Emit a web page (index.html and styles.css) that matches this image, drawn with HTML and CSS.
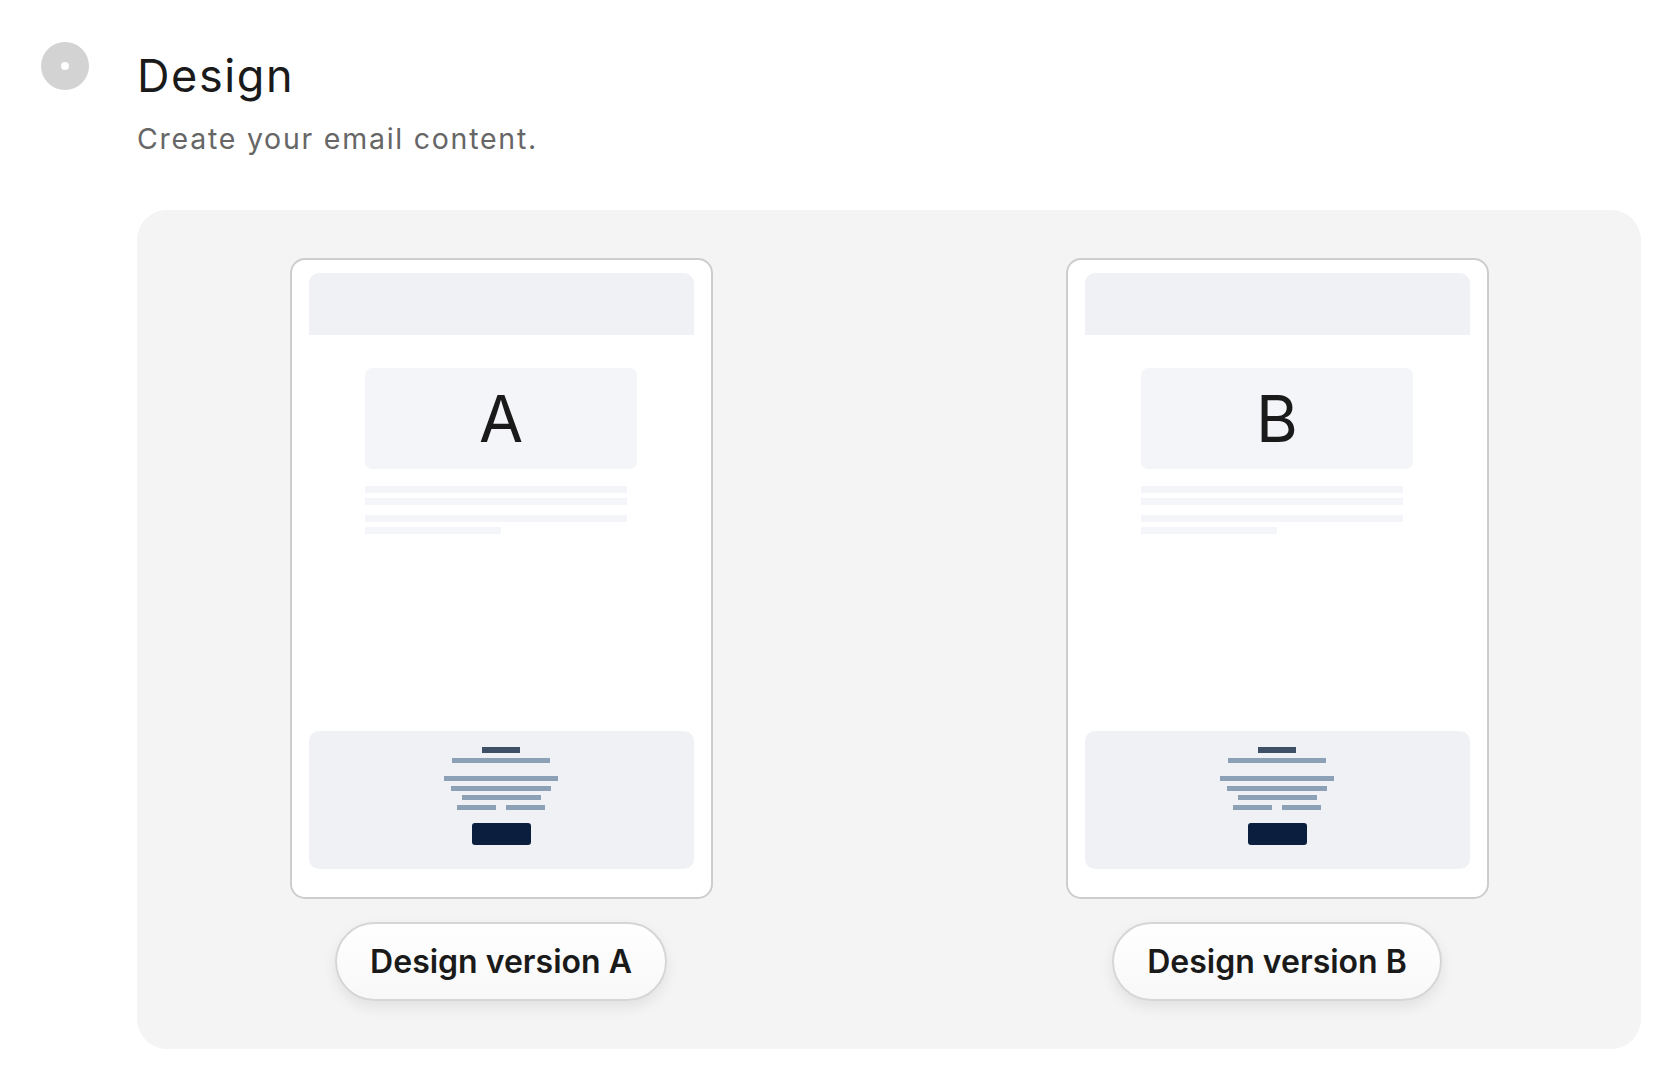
FILE: index.html
```html
<!DOCTYPE html>
<html lang="en">
<head>
<meta charset="utf-8">
<title>Design</title>
<link rel="stylesheet" href="styles.css">
</head>
<body>
<div class="step">
  <div class="step-marker"><span class="step-dot"></span></div>
  <div class="step-body">
    <h1 class="step-title">Design</h1>
    <p class="step-subtitle">Create your email content.</p>
    <div class="variants">
      <div class="variant">
        <div class="preview">
          <div class="pv-header"></div>
          <div class="pv-hero">A</div>
          <div class="pv-lines">
            <div class="pv-line"></div>
            <div class="pv-line"></div>
            <div class="pv-line pv-line-gap"></div>
            <div class="pv-line pv-line-short"></div>
          </div>
          <div class="pv-footer">
            <div class="fb fb-title"></div>
            <div class="fb fb-sub"></div>
            <div class="fb fb-3"></div>
            <div class="fb fb-4"></div>
            <div class="fb fb-5"></div>
            <div class="fb-pair"><div class="fb fb-half"></div><div class="fb fb-half"></div></div>
            <div class="fb-btn"></div>
          </div>
        </div>
        <button class="variant-label">Design version A</button>
      </div>
      <div class="variant">
        <div class="preview">
          <div class="pv-header"></div>
          <div class="pv-hero">B</div>
          <div class="pv-lines">
            <div class="pv-line"></div>
            <div class="pv-line"></div>
            <div class="pv-line pv-line-gap"></div>
            <div class="pv-line pv-line-short"></div>
          </div>
          <div class="pv-footer">
            <div class="fb fb-title"></div>
            <div class="fb fb-sub"></div>
            <div class="fb fb-3"></div>
            <div class="fb fb-4"></div>
            <div class="fb fb-5"></div>
            <div class="fb-pair"><div class="fb fb-half"></div><div class="fb fb-half"></div></div>
            <div class="fb-btn"></div>
          </div>
        </div>
        <button class="variant-label">Design version B</button>
      </div>
    </div>
  </div>
</div>
</body>
</html>
```

FILE: styles.css
```css
* { box-sizing: border-box; }

html, body {
  margin: 0;
  padding: 0;
  background: #ffffff;
  font-family: Inter, "Noto Sans", "Liberation Sans", sans-serif;
  color: #1a1a1a;
}

.step {
  display: flex;
  align-items: flex-start;
  padding: 42px 35px 0 41px;
}

.step-marker {
  width: 48px;
  height: 48px;
  border-radius: 50%;
  background: #d3d3d3;
  display: flex;
  align-items: center;
  justify-content: center;
  flex: none;
}

.step-dot {
  width: 8px;
  height: 8px;
  border-radius: 50%;
  background: #ffffff;
}

.step-body {
  flex: 1;
  margin-left: 48px;
}

.step-title {
  margin: 7px 0 0;
  font-size: 45px;
  line-height: 54px;
  font-weight: 400;
  color: #1a1a1a;
  letter-spacing: 1.6px;
}

.step-subtitle {
  margin: 19px 0 0;
  font-size: 28.5px;
  line-height: 34px;
  font-weight: 400;
  color: #666666;
  letter-spacing: 1.75px;
}

.variants {
  margin-top: 54px;
  background: #f4f4f4;
  border-radius: 30px;
  padding: 48px 0 48px;
  display: flex;
  justify-content: center;
  gap: 353px;
}

.variant {
  display: flex;
  flex-direction: column;
  align-items: center;
}

.preview {
  width: 423px;
  height: 641px;
  background: #ffffff;
  border: 2px solid #cdcdcd;
  border-radius: 15px;
  padding: 13px 17px 28px;
  display: flex;
  flex-direction: column;
  align-items: center;
}

.pv-header {
  align-self: stretch;
  height: 62px;
  background: #f0f1f4;
  border-radius: 10px 10px 0 0;
}

.pv-hero {
  margin-top: 33px;
  width: 272px;
  height: 101px;
  background: #f4f5f8;
  border-radius: 7px;
  display: flex;
  align-items: center;
  justify-content: center;
  font-size: 64px;
  font-weight: 400;
  color: #1a1a1a;
  line-height: 1;
}

.pv-lines {
  margin-top: 17px;
  width: 272px;
  display: flex;
  flex-direction: column;
  gap: 5px;
}

.pv-line {
  width: 262px;
  height: 7px;
  background: #f4f5f8;
}

.pv-line-gap { margin-top: 5px; }

.pv-line-short { width: 136px; }

.pv-footer {
  margin-top: auto;
  align-self: stretch;
  height: 138px;
  background: #f0f1f4;
  border-radius: 10px;
  display: flex;
  flex-direction: column;
  align-items: center;
  padding-top: 16px;
}

.fb {
  height: 5px;
  background: #8ca1b5;
}

.fb-title {
  width: 38px;
  height: 6px;
  background: #3f4f66;
}

.fb-sub { width: 98px; margin-top: 5px; }
.fb-3 { width: 114px; margin-top: 13px; }
.fb-4 { width: 100px; margin-top: 5px; }
.fb-5 { width: 79px; margin-top: 4px; }

.fb-pair {
  margin-top: 5px;
  display: flex;
  gap: 10px;
}

.fb-half { width: 39px; }

.fb-btn {
  margin-top: 13px;
  width: 59px;
  height: 22px;
  border-radius: 3px;
  background: #0b1e3e;
}

.variant-label {
  margin-top: 23px;
  height: 79px;
  padding: 0 33px;
  border: 2px solid #d6d6d6;
  border-radius: 40px;
  background: linear-gradient(#ffffff, #f8f8f8);
  box-shadow: 0 6px 14px rgba(0, 0, 0, 0.08);
  font-family: Inter, "Noto Sans", "Liberation Sans", sans-serif;
  font-size: 32px;
  font-weight: 600;
  color: #1a1a1a;
  display: flex;
  align-items: center;
  justify-content: center;
  cursor: pointer;
}
```
